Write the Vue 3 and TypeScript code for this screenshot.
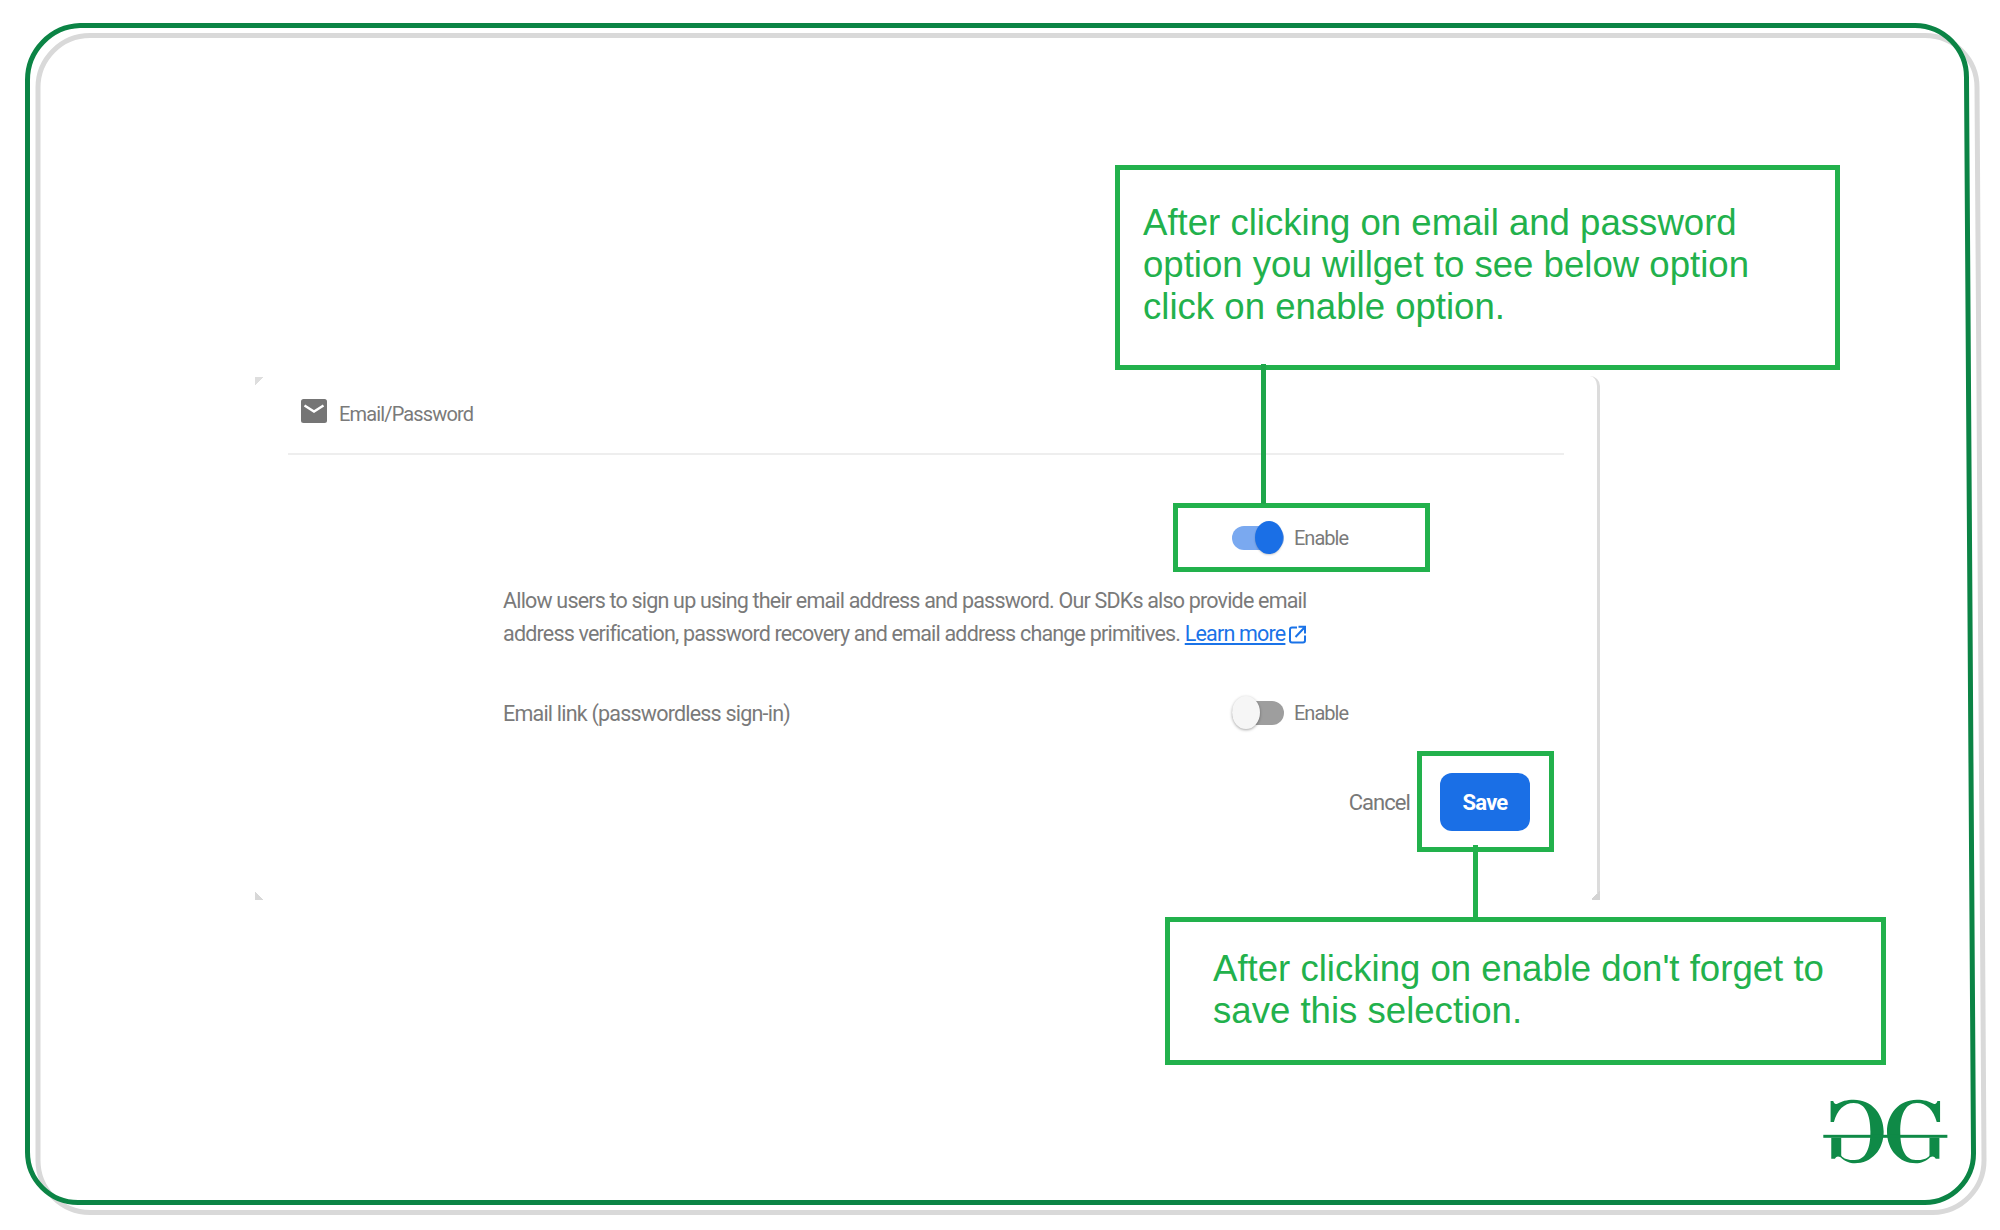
<script setup lang="ts">
// the outer frame in the screenshot leans a little to the right, so it is a path and not a border
const frameGreen = 'M80 25.5 H1915 A52 52 0 0 1 1966.5 78 L1973.5 1153 A49 49 0 0 1 1925 1202.5 H78 A50.5 50.5 0 0 1 27.5 1152 V80 A54.5 54.5 0 0 1 80 25.5 Z'
const frameGrey = 'M90 35.5 H1925 A52 52 0 0 1 1977 88 L1984 1160 A52 52 0 0 1 1933 1212.5 H90 A52 52 0 0 1 38 1160 V88 A52 52 0 0 1 90 35.5 Z'
const logoStroke = 'M478 152 L478 215 L468 215 C458 180 438 158 408 158 C372 158 358 195 358 245 C358 295 372 330 405 330 C425 330 440 326 446 316 L446 263 L476 263 L476 326 L465 326 C460 318 455 318 448 322 C435 335 420 340 405 340 C355 340 318 300 318 245 C318 190 355 148 408 148 C430 148 445 153 458 160 C465 163 468 158 470 152 Z'
</script>

<template>
    <div class="page">
        <svg class="frame" viewBox="0 0 2000 1230" width="2000" height="1230">
            <path :d="frameGrey" fill="none" stroke="#d9d9d9" stroke-width="5" />
            <path :d="frameGreen" fill="none" stroke="#0b8445" stroke-width="5" />
        </svg>

        <div class="card">
            <span class="card__corner card__corner--tl"></span>
            <span class="card__corner card__corner--bl"></span>
            <span class="card__corner card__corner--br"></span>

            <div class="card__header">
                <svg class="card__icon" viewBox="0 0 26 24" width="26" height="24">
                    <rect width="26" height="24" rx="2.5" fill="#757575" />
                    <path d="M3.5 6.5 L13 12.5 L22.5 6.5" fill="none" stroke="#fff" stroke-width="2.4" />
                </svg>
                <span class="card__title">Email/Password</span>
            </div>

            <div class="card__body">
                <div class="switch-row switch-row--first">
                    <div class="switch switch--on"><span class="switch__thumb"></span></div>
                    <span class="switch-row__label">Enable</span>
                </div>

                <p class="description">
                    Allow users to sign up using their email address and password. Our SDKs also provide email<br>
                    address verification, password recovery and email address change primitives.
                    <a class="description__link">Learn more</a>
                    <svg class="description__icon" viewBox="0 0 17 19" width="17" height="19">
                        <path d="M8 2.5 H3 Q1 2.5 1 4.5 V15.5 Q1 17.5 3 17.5 H14 Q16 17.5 16 15.5 V10.5" fill="none" stroke="#1a73e8" stroke-width="2" />
                        <path d="M6.5 12 L15 3 M9.5 1.8 H16 V8.5" fill="none" stroke="#1a73e8" stroke-width="2" />
                    </svg>
                </p>

                <div class="link-row">
                    <span class="link-row__label">Email link (passwordless sign-in)</span>
                    <div class="switch switch--off"><span class="switch__thumb"></span></div>
                    <span class="switch-row__label">Enable</span>
                </div>

                <div class="actions">
                    <span class="actions__cancel">Cancel</span>
                    <button class="actions__save">Save</button>
                </div>
            </div>
        </div>

        <!-- annotations drawn on top of the screenshot -->
        <div class="note note--top">
            After clicking on email and password<br>
            option you willget to see below option<br>
            click on enable option.
        </div>
        <div class="note note--bottom">
            After clicking on enable don't forget to<br>
            save this selection.
        </div>
        <span class="marker marker--toggle"></span>
        <span class="marker marker--save"></span>
        <span class="line line--top"></span>
        <span class="line line--bottom"></span>

        <svg class="logo" viewBox="120 140 390 205" width="130" height="68">
            <g fill="#0f8a47">
                <path :d="logoStroke" />
                <path :d="logoStroke" transform="translate(626 0) scale(-1 1)" />
                <rect x="126" y="254" width="374" height="9" />
            </g>
        </svg>
    </div>
</template>

<style>
    body {
        margin: 0;
        background: #fff;
    }
</style>

<style scoped>
    .page {
        position: relative;
        width: 2000px;
        height: 1230px;
        padding: 376px 0 0 255px;
        box-sizing: border-box;
        overflow: hidden;
        font-family: Roboto, sans-serif;
        background: #fff;
    }

    .frame {
        position: absolute;
        left: 0;
        top: 0;
    }

    .card {
        position: relative;
        width: 1345px;
        height: 524px;
        box-sizing: border-box;
        background: #fff;
        border-right: 3px solid #dcdcdc;
        border-radius: 0 10px 0 0;
    }

    .card__corner {
        position: absolute;
        width: 8px;
        height: 10px;
    }

    .card__corner--tl {
        left: 0;
        top: 1px;
        background: linear-gradient(135deg, #dedede 45%, transparent 50%);
    }

    .card__corner--bl {
        left: 0;
        bottom: 0;
        background: linear-gradient(45deg, #d8d8d8 45%, transparent 50%);
    }

    .card__corner--br {
        right: -3px;
        bottom: 0;
        background: linear-gradient(-45deg, #d4d4d4 50%, transparent 50%);
    }

    .card__header {
        display: flex;
        align-items: center;
        gap: 12px;
        height: 79px;
        margin: 0 33px;
        padding: 0 0 5px 13px;
        box-sizing: border-box;
        border-bottom: 2px solid #eeeeee;
    }

    .card__icon {
        flex: none;
        margin-top: -3px;
    }

    .card__title {
        margin-top: 4px;
        font-size: 20px;
        letter-spacing: -0.85px;
        color: #7a7a7a;
    }

    .card__body {
        display: flex;
        flex-direction: column;
        padding-left: 248px;
    }

    .switch-row {
        display: flex;
        align-items: center;
    }

    .switch-row--first {
        height: 36px;
        margin-top: 65px;
        padding-left: 729px;
    }

    .switch-row__label {
        margin-left: 10px;
        font-size: 20px;
        letter-spacing: -1px;
        color: #7a7a7a;
    }

    .switch {
        position: relative;
        flex: none;
        width: 52px;
        height: 24px;
        border-radius: 12px;
    }

    .switch--on {
        background: #7aa9f0;
    }

    .switch--off {
        background: #9e9e9e;
    }

    .switch__thumb {
        position: absolute;
        top: -5px;
        width: 28px;
        height: 33px;
        border-radius: 50%;
    }

    .switch--on .switch__thumb {
        right: 1px;
        background: #1a6fe6;
        box-shadow: 0 1px 2px rgba(0, 0, 0, 0.2);
    }

    .switch--off .switch__thumb {
        left: 0;
        background: #f6f6f6;
        box-shadow: 0 1px 3px rgba(0, 0, 0, 0.35);
    }

    .description {
        margin: 28px 0 0;
        font-size: 21.5px;
        line-height: 33px;
        letter-spacing: -0.81px;
        color: #7a7a7a;
        white-space: nowrap;
    }

    .description__link {
        color: #1a73e8;
        text-decoration: underline;
    }

    .description__icon {
        margin-left: 4px;
        vertical-align: -3px;
    }

    .link-row {
        display: flex;
        align-items: center;
        height: 36px;
        margin-top: 45px;
    }

    .link-row__label {
        width: 729px;
        font-size: 21.5px;
        letter-spacing: -0.79px;
        color: #7a7a7a;
    }

    .actions {
        display: flex;
        align-items: center;
        justify-content: flex-end;
        gap: 30px;
        width: 1027px;
        margin-top: 42px;
    }

    .actions__cancel {
        font-size: 22px;
        letter-spacing: -0.95px;
        color: #787878;
    }

    .actions__save {
        width: 90px;
        height: 58px;
        padding: 0;
        border: 0;
        border-radius: 12px;
        background: #1a6fe6;
        color: #fff;
        font-family: Roboto, sans-serif;
        font-size: 22px;
        font-weight: 700;
        letter-spacing: -0.8px;
    }

    .note {
        position: absolute;
        box-sizing: border-box;
        border: 5px solid #22b14c;
        background: #fff;
        font-family: "Liberation Sans", Arial, sans-serif;
        font-size: 36.6px;
        line-height: 42px;
        color: #22b14c;
        white-space: nowrap;
    }

    .note--top {
        left: 1115px;
        top: 165px;
        width: 725px;
        height: 205px;
        padding: 32px 0 0 23px;
    }

    .note--bottom {
        left: 1165px;
        top: 917px;
        width: 721px;
        height: 148px;
        padding: 26px 0 0 43px;
    }

    .marker {
        position: absolute;
        box-sizing: border-box;
        border: 5px solid #22b14c;
    }

    .marker--toggle {
        left: 1173px;
        top: 503px;
        width: 257px;
        height: 69px;
    }

    .marker--save {
        left: 1417px;
        top: 751px;
        width: 137px;
        height: 101px;
    }

    .line {
        position: absolute;
        width: 5px;
        background: #22b14c;
    }

    .line--top {
        left: 1261px;
        top: 364px;
        height: 140px;
        background: #1ea64a;
    }

    .line--bottom {
        left: 1473px;
        top: 845px;
        height: 73px;
    }

    .logo {
        position: absolute;
        left: 1821px;
        top: 1097px;
    }
</style>
